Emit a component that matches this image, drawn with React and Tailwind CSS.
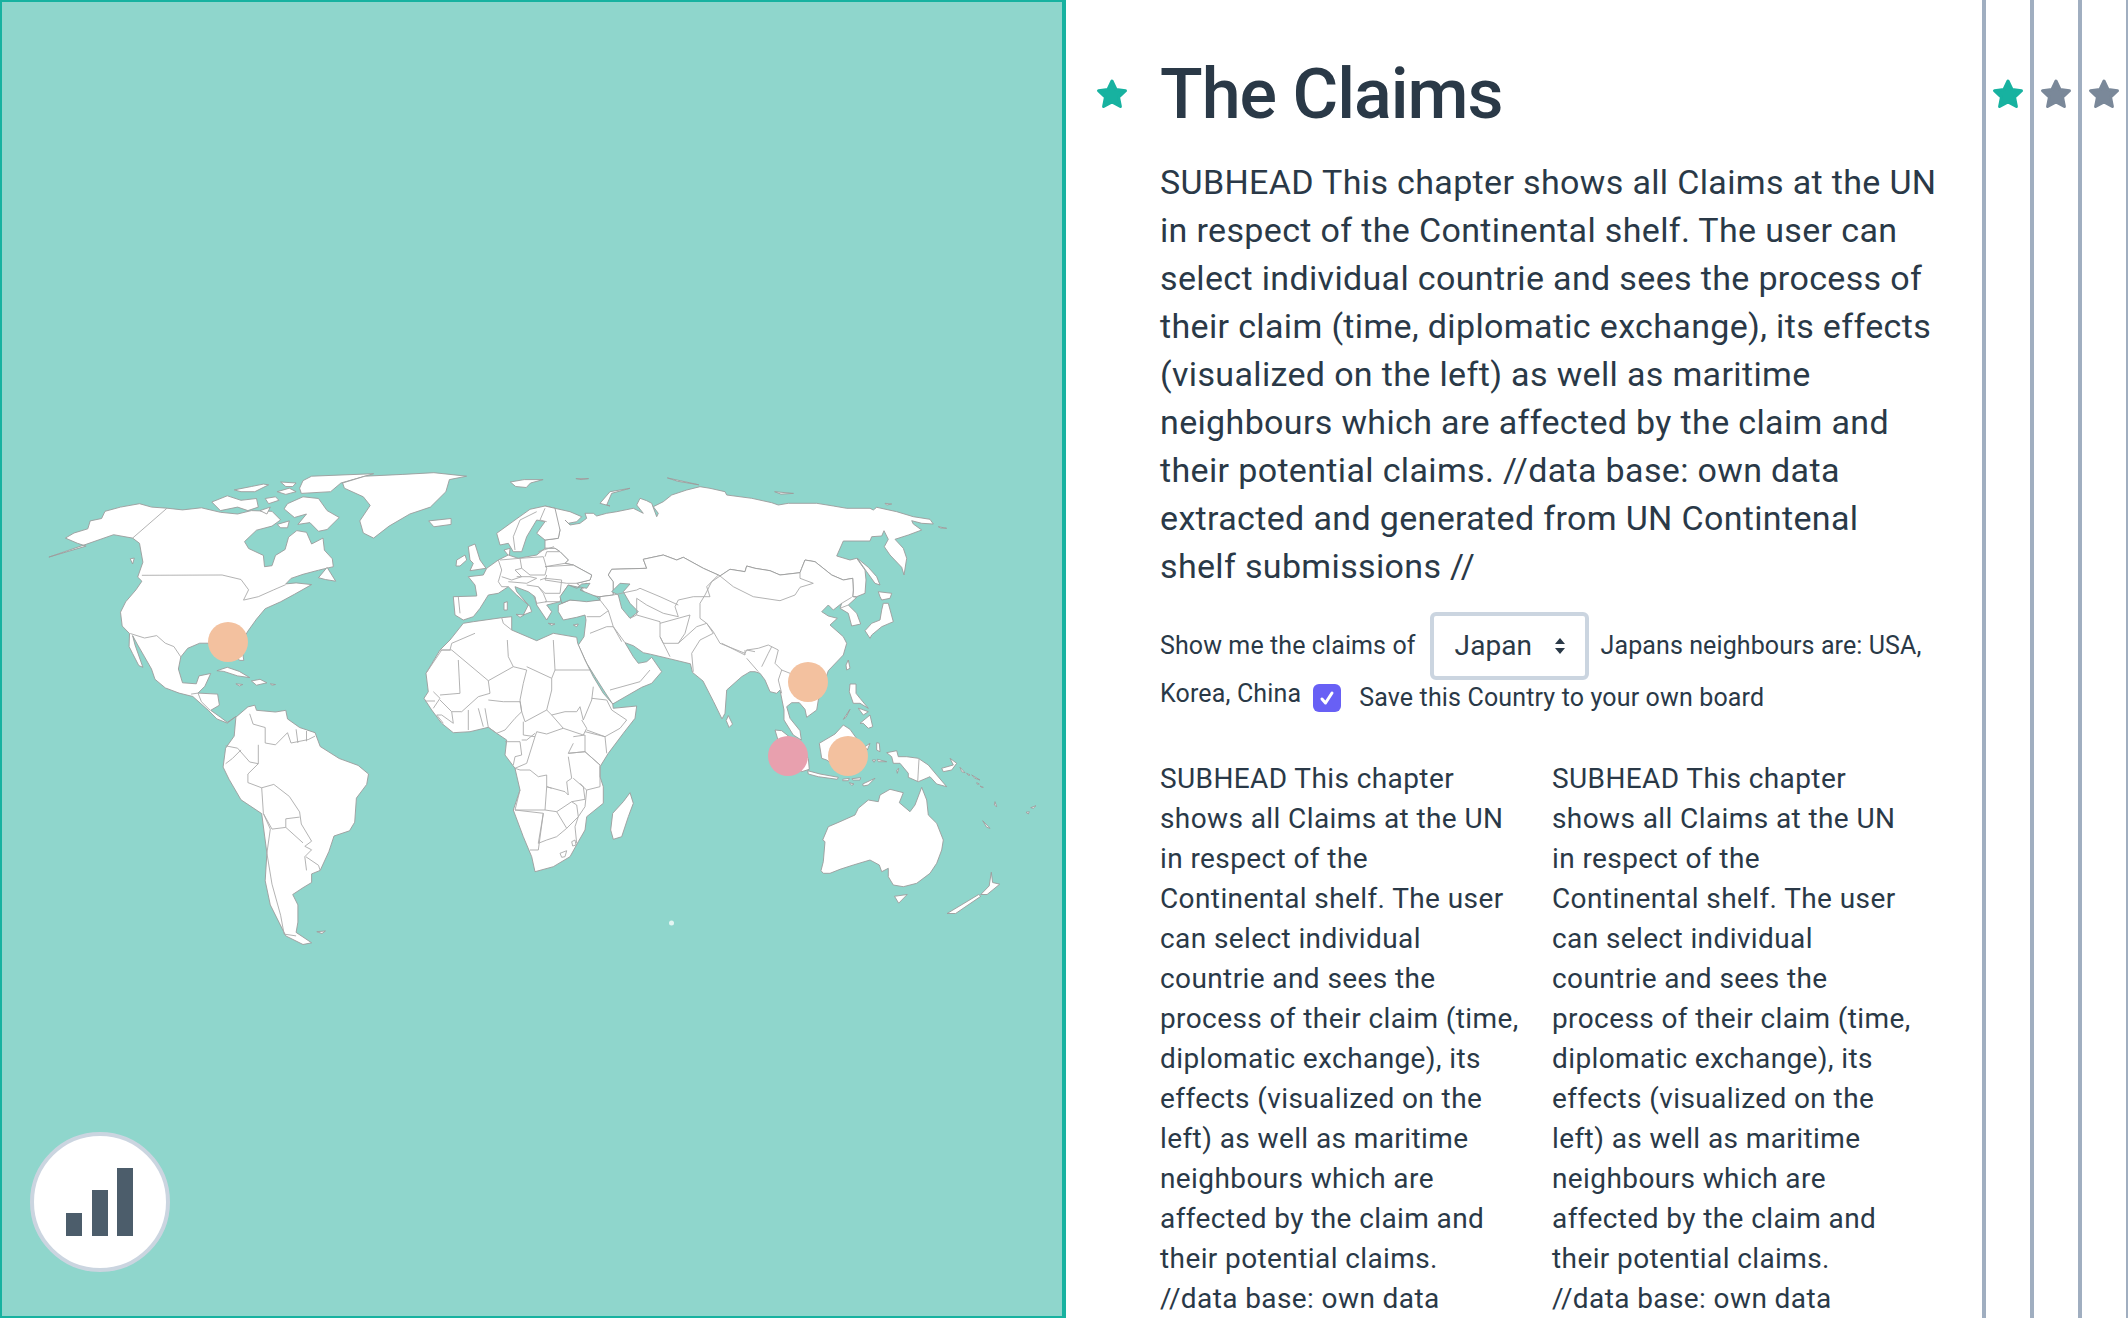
import React from 'react';

// trace helpers: each one maps coordinates read off a crop back to page pixels
const crop = (ox, oy, kx, ky = kx) => (s) =>
  s.trim().split(/\s+/).map((p) => {
    const [x, y] = p.split(',').map(Number);
    return [ox + x / kx, oy + y / ky];
  });
const a = crop(0, 440, 2.904);
const b = crop(400, 440, 2.376, 2.904);
const e = crop(430, 480, 3);
const f = crop(700, 480, 3);
const g = crop(420, 640, 3);
const h = crop(760, 660, 3);

const land = [
  // north + central america
  a('215,270 255,258 262,235 295,228 305,207 350,195 405,185 440,195 485,198 530,203 585,197 640,210 690,215 730,205 790,207 815,232 790,250 745,262 710,295 722,315 765,335 768,368 790,365 800,335 828,318 838,282 862,263 890,268 905,302 938,285 942,320 965,345 968,368 925,378 880,390 845,402 830,418 860,415 905,420 855,448 815,470 770,490 745,520 720,555 700,590 708,640 695,640 680,605 660,595 610,590 580,590 545,605 525,630 518,665 530,705 570,708 578,685 612,678 595,715 575,735 632,738 637,770 612,785 640,805 660,820 685,803 660,822 630,810 605,785 560,745 520,735 480,720 450,695 440,665 420,630 400,595 385,568 392,595 415,660 403,655 385,620 375,600 376,562 355,540 350,500 365,470 395,435 412,410 400,398 415,355 405,300 385,285 330,275 250,303 142,340 250,308 225,300 190,285'),
  a('925,400 950,370 975,410 945,405'),
  a('378,345 390,343 385,360'),
  // arctic islands
  a('615,180 660,162 700,175 745,170 750,195 720,205 690,195 640,205'),
  a('680,145 730,135 765,128 780,130 740,150 700,150'),
  a('815,122 860,125 850,135 830,135'),
  a('770,170 800,165 810,175 780,185'),
  a('805,150 840,140 860,150 830,158'),
  a('835,185 880,165 925,170 950,205 985,225 950,260 925,265 900,240 865,245 890,215 855,225 825,200'),
  a('880,118 905,105 1085,98 990,125 960,150 875,155 870,140'),
  a('805,245 840,235 835,255 815,255'),
  a('755,205 785,195 775,215'),
  // greenland, iceland
  a('995,125 1060,105 1170,100 1260,95 1355,105 1305,115 1295,150 1250,195 1190,215 1130,250 1085,285 1055,270 1045,235 1075,190 1055,165 1000,140'),
  a('1245,235 1310,228 1310,245 1260,252'),
  // caribbean
  a('630,670 660,660 695,672 725,690 690,685 650,672'),
  a('730,700 755,695 775,705 745,712'),
  a('685,708 705,710 695,714'),
  a('785,708 800,710 790,712'),
  // south america
  a('685,805 720,775 740,770 745,785 800,790 830,785 835,810 870,835 915,850 930,890 985,925 1040,945 1070,970 1065,1000 1035,1040 1030,1110 1015,1135 970,1150 955,1195 930,1250 905,1260 905,1285 880,1300 850,1320 865,1350 865,1400 860,1430 905,1460 880,1465 830,1440 810,1400 785,1350 770,1280 775,1200 760,1085 700,1045 665,985 648,950 655,895 680,860'),
  a('920,1428 945,1426 935,1433'),
  // russia
  [
    ...e('345,78 375,85 420,95 455,110 440,125 415,130 405,120 420,135 450,130 470,115 465,100 490,100 500,108 530,100 560,95 610,85 640,100 620,75 630,55 650,62 665,70 680,110 685,100 670,80 700,65 725,45 770,30 810,20'),
    ...f('30,25 75,35 80,45 155,55 215,68 235,75 265,70 350,70 400,78 440,85 510,85 520,90 530,82 590,95 640,110 690,118 700,132 665,130 635,122 640,132 665,150 625,165 585,178 610,205 620,235 612,285 605,262 570,225 553,200 565,178 552,152 545,168 515,170 510,183 430,183 410,228 450,240 470,235 495,270 498,300 495,340 470,350 458,350 460,330 458,295 430,300 395,285 345,245 315,240 305,265 300,278 240,285 210,272 165,265 140,258 135,275 90,268 60,288'),
    ...e('865,285 820,265 760,232 740,240 700,225 640,238 650,265 545,268 535,285 550,305 550,345 510,350 470,345 440,310 480,300 485,285 430,255 405,250 415,240 390,215 375,205 345,205 345,180 385,175 390,150 370,115'),
  ],
  f('472,235 505,262 530,290 540,315 525,310 500,275'),
  // scandinavia, uk, denmark
  e('200,160 255,120 300,88 345,78 375,85 390,150 385,175 345,180 320,160 345,125 320,120 290,170 275,215 250,215 235,190 210,195'),
  e('115,200 135,192 150,240 168,265 120,272 130,250 120,240'),
  e('80,240 105,225 110,240 90,258 78,258'),
  e('222,210 240,205 238,230'),
  // europe
  e('70,350 140,348 140,345 135,315 115,290 160,285 170,265 205,240 235,225 265,235 320,225 345,205 375,205 390,215 415,240 405,250 430,255 485,285 480,300 440,310 460,325 415,315 395,345 390,365 350,375 365,395 350,420 320,375 315,350 295,335 255,320 260,335 300,380 305,395 280,405 295,375 260,345 235,320 205,340 175,345 150,385 130,410 100,420 75,405'),
  e('222,368 232,365 232,390 222,390'),
  e('258,403 282,405 270,412'),
  e('355,430 375,432 365,436'),
  e('430,435 445,432 440,440'),
  // asia south of russia
  [
    ...e('510,360 510,350 550,345 550,305 535,285 545,268 650,265 640,238 700,225 740,240 760,232 820,265 865,285'),
    ...f('60,288 90,268 135,275 140,258 165,265 210,272 240,285 300,278 305,265 315,240 345,245 395,285 430,300 458,295 460,330 458,350 470,352 445,375 470,400 482,432 455,438 445,400 420,385 425,370 400,390 385,375 365,395 385,408 412,415 390,435 430,470 440,490 430,525 385,572'),
    ...h('175,120 170,150 140,172 135,148 118,128 95,128 80,140 90,175 120,212 124,240 100,225 72,180 72,150 60,90 50,100 30,95 15,60 0,40'),
    ...f('165,575 150,575 125,590 80,630 75,700'),
    ...b('765,810 745,760 720,700 695,675 690,650 640,635 595,622'),
    ...e('640,518 610,497 585,488 610,530 625,550 650,545 665,532 695,575 665,610 635,622 548,672 530,645 495,590 470,550 445,495 462,470 468,420 465,405 440,412 400,420 385,395 385,375 420,360 470,362'),
  ],
  // japan, taiwan, philippines
  f('550,370 565,370 580,425 545,440 515,465 510,475 495,452 515,430 540,420 545,390'),
  f('535,335 575,340 570,355 545,360 540,350'),
  f('445,540 450,565 440,570 438,555'),
  b('780,800 790,825 782,835 775,815'),
  h('270,72 288,72 288,100 300,115 325,145 300,130 280,130 268,95'),
  h('300,190 330,165 338,200 325,205 310,190'),
  h('295,145 310,165 325,155 305,148'),
  h('250,178 270,148 258,172'),
  // indonesia
  h('45,210 65,212 100,240 145,295 148,328 125,335 85,300 60,260'),
  h('143,332 180,342 235,352 232,358 175,350 145,342'),
  h('178,250 225,222 250,195 270,208 300,250 310,320 250,335 200,300 185,295'),
  h('315,260 330,250 322,270'),
  h('350,248 358,250 360,275 350,270'),
  h('248,358 268,355 265,362 248,362'),
  h('276,356 302,353 300,360 278,360'),
  h('268,368 282,372 275,376'),
  h('308,372 345,355 325,375 310,378'),
  h('352,298 380,305 355,305'),
  h('337,300 347,300 342,307'),
  h('410,330 416,325 412,340'),
  // new guinea + pacific
  h('380,278 410,272 415,290 440,290 475,295 505,315 530,345 560,380 530,372 510,350 475,365 445,352 445,340 420,310 400,310 395,290'),
  h('545,325 580,315 570,295 590,310 575,330 550,335'),
  h('600,322 615,338 605,335'),
  h('635,345 660,360 645,355'),
  h('620,340 630,345 625,346'),
  h('650,368 658,372 652,373'),
  h('660,378 670,382 664,382'),
  h('705,425 710,440 703,435'),
  h('798,457 808,455 805,462'),
  h('812,443 828,437 820,445'),
  h('668,482 690,505 680,502'),
  // australia, nz
  h('183,632 190,605 195,545 188,540 205,500 240,485 285,465 295,445 325,420 355,425 360,405 390,388 430,398 418,428 450,455 465,435 485,382 500,420 505,465 530,490 550,540 545,570 530,610 510,640 470,670 430,680 400,675 385,650 385,625 365,635 358,615 330,600 280,615 240,628 210,640 190,640'),
  b('1175,1325 1205,1320 1185,1345'),
  b('1405,1255 1408,1285 1425,1290 1395,1320 1380,1320 1400,1295'),
  b('1300,1375 1375,1320 1380,1325 1320,1375'),
  // northern islands
  b('262,122 295,115 340,115 310,125 300,138 275,135'),
  b('418,112 448,112 430,115'),
  e('510,70 540,35 600,25 545,40 530,75 540,78'),
  b('635,110 680,122 710,130 660,120'),
  b('890,150 935,155 905,157'),
  f('555,70 575,72 560,75'),
  f('715,140 740,145 722,144'),
  // africa
  [
    ...e('100,430 130,425 215,413 245,410 245,450 320,482 370,460 440,472 443,490 465,540 490,590 520,640 548,672'),
    ...g('580,205 650,198 645,235 610,280 565,340 540,380 540,410 550,440 550,490 500,530 495,570 475,605 450,650 400,680 345,695 335,650 310,590 280,510 300,450 285,385 255,345 260,300 230,280 205,262 150,275 100,278 65,250 35,210 12,175 25,155 18,100'),
    ...e('30,510 60,480'),
  ],
  g('630,458 640,490 625,530 605,590 580,598 572,570 578,520 610,485'),
];

// inland seas sit on top of the land
const seas = [
  e('390,350 415,315 440,325 470,310 450,330 500,350 510,360 470,365 420,360 395,370'),
  e('545,335 570,310 600,312 580,335 600,370 625,395 600,415 575,385 565,345'),
  e('470,325 445,320 455,312 480,310'),
];

const borders = [
  // americas
  a('485,198 385,285'),
  a('412,393 645,392 700,405 722,435 707,465 750,455 795,435 830,420'),
  a('378,562 420,575 455,568 480,590 505,600 525,630'),
  a('555,738 575,735 585,760 610,785'),
  a('725,795 735,825 770,835 770,880 800,885 835,850'),
  a('835,850 845,880 895,870 915,860'),
  a('860,840 865,880'),
  a('890,845 890,875'),
  a('750,885 750,940 720,970 720,995 760,1010 795,1000 840,1035 870,1080 875,1115 905,1165 885,1180 905,1190 885,1210 890,1250'),
  a('655,888 690,895 725,935 750,940'),
  a('655,940 675,925 700,900'),
  a('760,1010 765,1085 790,1130 830,1125 830,1100 870,1095'),
  a('830,1125 880,1170'),
  a('765,1085 785,1130 775,1200 790,1290 815,1380 825,1435 860,1440'),
  a('888,1210 925,1235 930,1250'),
  // europe
  e('205,240 215,270 205,305 215,320 235,320'),
  e('210,240 270,235 275,265 255,270 275,290 245,300 215,290'),
  e('270,235 340,230 350,265 345,285 300,285 275,265'),
  e('260,290 300,290 320,295 290,310 235,305'),
  e('345,260 430,255'),
  e('350,285 345,300 410,310 440,310'),
  e('330,300 345,295 395,300 390,340 345,340 325,320'),
  e('345,230 350,215 390,215'),
  e('345,260 405,250'),
  e('290,315 325,320 340,340 350,365 320,370 310,345'),
  e('345,365 390,365'),
  e('85,350 90,400'),
  e('320,95 270,120 250,170 255,210'),
  e('345,85 330,120 350,125'),
  e('325,215 372,200'),
  // middle east + central asia
  e('510,360 535,392'),
  e('470,410 510,410 535,392 550,440 585,488'),
  e('690,425 690,470 720,530'),
  e('600,415 620,405 690,425'),
  e('480,460 530,440 550,440 575,485'),
  e('540,630 630,605 660,570'),
  e('620,405 620,355 650,375 700,400 745,410 735,380 745,360 790,350 840,350 830,320 865,285'),
  e('550,345 620,330 630,325 690,350 745,375'),
  e('690,430 780,405 765,460 745,490 700,490 690,470'),
  e('745,490 800,440 830,430 850,460 810,480 785,520 790,575'),
  // china, india, mongolia
  f('0,415 20,430 40,455 60,490 135,520 140,510 175,505 205,495 235,510 225,550 245,570 270,580'),
  f('60,288 100,320 160,350 240,362 285,345 300,322 340,310 300,295 300,278'),
  f('60,288 35,305 15,345 0,370 0,415'),
  f('65,490 135,525 135,510'),
  f('140,535 175,575'),
  f('140,510 165,515'),
  f('185,560 205,520 215,500'),
  f('245,570 235,600 245,640'),
  f('420,385 445,375'),
  f('425,370 455,352'),
  h('477,297 473,365'),
  // africa
  e('245,450 220,430 215,413'),
  e('135,460 65,490 60,510 30,510'),
  g('18,100 65,30 95,30'),
  g('95,30 205,122 280,80 265,50 262,0'),
  g('115,60 120,160 60,165'),
  g('205,122 210,160 175,170 125,215 95,215'),
  g('280,80 320,90 310,130 300,180 305,215 315,245 380,210 395,150 395,115 405,90'),
  g('405,90 400,0'),
  g('405,90 510,90'),
  g('320,80 395,115'),
  g('205,180 250,185 300,185 305,215 285,235 255,270 230,280 205,262 195,205'),
  g('175,205 190,260'),
  g('145,210 145,270'),
  g('380,210 395,225 435,215 470,215 480,200 490,240 515,180 520,140'),
  g('395,225 430,265 490,285 500,265 485,240'),
  g('310,245 310,285 345,290 350,275 380,282 420,268 430,265'),
  g('515,175 560,180 575,210 620,240 600,265 555,290 500,270'),
  g('495,275 555,290 560,340'),
  g('495,335 540,375'),
  g('460,290 495,285 495,335 445,340 460,310'),
  g('345,290 320,370 285,385 300,390 330,390 355,410 380,405 380,440 435,455 445,465 440,425 455,415 445,350'),
  g('445,340 495,335 540,375 540,440 500,450 460,415'),
  g('380,440 375,510 285,510 300,450'),
  g('375,510 410,515 455,485 495,478 490,440 480,430'),
  g('395,445 380,440'),
  g('500,450 495,500 475,530 465,560 470,610'),
  g('410,515 440,565 475,530 470,495 455,485'),
  g('370,520 355,610 380,600 410,590 440,565'),
  g('285,510 370,520 355,630 330,630'),
  g('255,305 300,305 305,345 285,350 280,375'),
  g('305,300 320,300 345,280'),
  g('40,155 60,175 40,205'),
  g('15,183 45,183'),
  g('60,180 95,215 100,250 65,225 50,225 70,250'),
];

// closed little rings inside south africa
const enclaves = [
  g('420,640 440,632 435,650 425,652'),
  g('455,605 465,600 468,615 458,618'),
];

const toPoints = (pts) => pts.map(([x, y]) => `${x.toFixed(1)},${y.toFixed(1)}`).join(' ');

const WorldMap = () => (
  <svg viewBox="2 2 1060 1314" className="block h-full w-full">
    <g fill="#fff" stroke="#9c9c9c" strokeWidth="0.9" strokeLinejoin="round">
      {land.map((pts, i) => (
        <polygon key={i} points={toPoints(pts)} />
      ))}
    </g>
    <g fill="#8fd6cc" stroke="#9c9c9c" strokeWidth="0.9" strokeLinejoin="round">
      {seas.map((pts, i) => (
        <polygon key={i} points={toPoints(pts)} />
      ))}
    </g>
    <g fill="none" stroke="#aaaaaa" strokeWidth="0.9" strokeLinejoin="round">
      {borders.map((pts, i) => (
        <polyline key={i} points={toPoints(pts)} />
      ))}
      {enclaves.map((pts, i) => (
        <polygon key={i} points={toPoints(pts)} />
      ))}
    </g>
    <circle cx="671.5" cy="923" r="2.5" fill="#e4f5f2" />
    <circle cx="228" cy="642" r="20" fill="#f3c19f" />
    <circle cx="808" cy="682" r="20" fill="#f3c19f" />
    <circle cx="848" cy="756" r="20" fill="#f3c19f" />
    <circle cx="788" cy="756" r="20" fill="#e8a0ae" />
  </svg>
);

const Star = ({ className }) => (
  <svg viewBox="0 0 32 32" className={`h-8 w-8 ${className}`} fill="currentColor" stroke="currentColor" strokeWidth="3" strokeLinejoin="round">
    <polygon points="16,3 20,11.5 29.5,12.7 22.6,19.2 24.4,28.5 16,24 7.6,28.5 9.4,19.2 2.5,12.7 12,11.5" />
  </svg>
);

const Rail = ({ color }) => (
  <div className="flex w-12 shrink-0 justify-center border-l-4 border-[#a0aec0] pt-[78px]">
    {color && <Star className={color} />}
  </div>
);

const intro = [
  'SUBHEAD This chapter shows all Claims at the UN',
  'in respect of the Continental shelf. The user can',
  'select individual countrie and sees the process of',
  'their claim (time, diplomatic exchange), its effects',
  '(visualized on the left) as well as maritime',
  'neighbours which are affected by the claim and',
  'their potential claims. //data base: own data',
  'extracted and generated from UN Contintenal',
  'shelf submissions //',
];

const column = [
  'SUBHEAD This chapter',
  'shows all Claims at the UN',
  'in respect of the',
  'Continental shelf. The user',
  'can select individual',
  'countrie and sees the',
  'process of their claim (time,',
  'diplomatic exchange), its',
  'effects (visualized on the',
  'left) as well as maritime',
  'neighbours which are',
  'affected by the claim and',
  'their potential claims.',
  '//data base: own data',
];

const Column = () => (
  <p className="w-[392px] text-[28px] leading-10 tracking-[0.4px]">
    {column.map((line) => (
      <span key={line} className="block whitespace-nowrap">{line}</span>
    ))}
  </p>
);

export default function App() {
  return (
    <div className="flex h-[1318px] w-[2128px] overflow-hidden bg-white text-[#2a3947] [font-family:Roboto,sans-serif]">
      {/* map panel */}
      <div className="relative w-[1066px] shrink-0 border-2 border-r-4 border-[#17b2a0] bg-[#8fd6cc]">
        <WorldMap />
        <div className="absolute bottom-[44px] left-[28px] flex h-[140px] w-[140px] items-center justify-center rounded-full border-4 border-[#cbd5e0] bg-white">
          <svg width="68" height="68" viewBox="0 0 68 68" fill="#4c5d6b">
            <rect x="0" y="45" width="16" height="23" />
            <rect x="26" y="22" width="16" height="46" />
            <rect x="51" y="0" width="16" height="68" />
          </svg>
        </div>
      </div>

      {/* chapter text */}
      <div className="w-[916px] shrink-0 pt-10">
        <div className="flex items-center pl-[30px]">
          <Star className="text-[#17b2a0]" />
          <h1 className="ml-8 text-[70px] font-medium leading-[108px] tracking-[-1px]">The Claims</h1>
        </div>
        <div className="pl-[94px]">
          <p className="mt-[10px] text-[34px] leading-[48px] tracking-[0.35px]">
            {intro.map((line) => (
              <span key={line} className="block whitespace-nowrap">{line}</span>
            ))}
          </p>
          <div className="mt-[22px] flex h-[68px] items-center text-[25px] tracking-[0.1px]">
            <span>Show me the claims of</span>
            <div className="ml-[14px] flex h-[68px] w-[159px] items-center justify-between rounded-md border-4 border-[#cbd5e0] pl-[21px] pr-[18px] text-[28px]">
              <span>Japan</span>
              <svg width="14" height="16" viewBox="0 0 12 16" fill="#2a3947">
                <path d="M6 0 L11 6 H1 Z M6 16 L1 10 H11 Z" />
              </svg>
            </div>
            <span className="ml-3">Japans neighbours are: USA,</span>
          </div>
          <div className="flex items-start text-[25px] leading-9 tracking-[0.15px]">
            <span className="mt-[-4px]">Korea, China</span>
            <div className="ml-[12px] mt-1 flex h-7 w-7 items-center justify-center rounded-md bg-[#6860f5]">
              <svg width="18" height="18" viewBox="0 0 18 18" fill="none" stroke="#fff" strokeWidth="3" strokeLinecap="round" strokeLinejoin="round">
                <path d="M4 10 L7.5 14 L14 4" />
              </svg>
            </div>
            <span className="ml-[18px]">Save this Country to your own board</span>
          </div>
          <div className="mt-[43px] flex">
            <Column />
            <Column />
          </div>
        </div>
      </div>

      <Rail color="text-[#17b2a0]" />
      <Rail color="text-[#7a8899]" />
      <Rail color="text-[#7a8899]" />
      <Rail />
    </div>
  );
}
